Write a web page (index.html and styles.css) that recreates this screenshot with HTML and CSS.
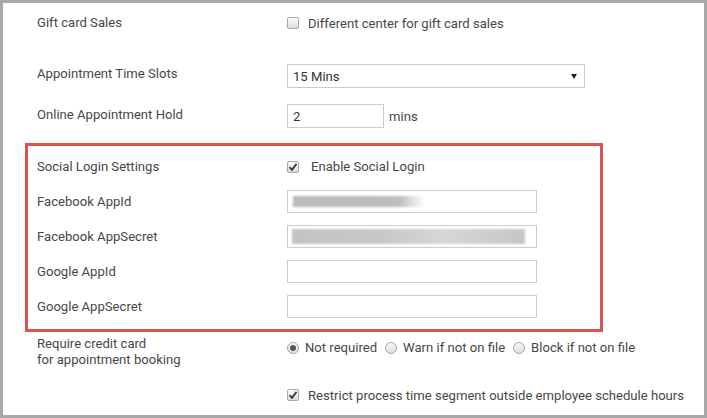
FILE: index.html
```html
<!DOCTYPE html>
<html lang="en">
<head>
    <meta charset="UTF-8">
    <title>Booking Settings</title>
    <link rel="stylesheet" href="styles.css">
</head>
<body>
    <div class="frame">
        <div class="row r-gift">
            <span class="label">Gift card Sales</span>
            <label class="opt">
                <span class="box"></span>
                Different center for gift card sales
            </label>
        </div>

        <div class="row r-slots">
            <span class="label">Appointment Time Slots</span>
            <div class="select">
                <span>15 Mins</span>
                <span class="arrow"></span>
            </div>
        </div>

        <div class="row r-hold">
            <span class="label">Online Appointment Hold</span>
            <div class="inline">
                <div class="field short">2</div>
                <span class="unit">mins</span>
            </div>
        </div>

        <div class="social">
            <div class="row r-enable">
                <span class="label">Social Login Settings</span>
                <label class="opt wide">
                    <span class="box checked">
                        <svg width="10" height="10" viewBox="0 0 10 10"><path d="M1.5 5.2 L4 7.8 L8.6 1.8" fill="none" stroke="#333" stroke-width="1.8"/></svg>
                    </span>
                    Enable Social Login
                </label>
            </div>
            <div class="row">
                <span class="label">Facebook AppId</span>
                <div class="field"><span class="blur blur-id"></span></div>
            </div>
            <div class="row">
                <span class="label">Facebook AppSecret</span>
                <div class="field"><span class="blur blur-secret"></span></div>
            </div>
            <div class="row">
                <span class="label">Google AppId</span>
                <div class="field"></div>
            </div>
            <div class="row">
                <span class="label">Google AppSecret</span>
                <div class="field"></div>
            </div>
        </div>

        <div class="row r-credit">
            <span class="label">Require credit card<br>for appointment booking</span>
            <div class="radios">
                <label class="radio"><span class="dot on"></span>Not required</label>
                <label class="radio"><span class="dot"></span>Warn if not on file</label>
                <label class="radio"><span class="dot"></span>Block if not on file</label>
            </div>
        </div>

        <div class="row r-restrict">
            <span class="label"></span>
            <label class="opt">
                <span class="box checked">
                    <svg width="10" height="10" viewBox="0 0 10 10"><path d="M1.5 5.2 L4 7.8 L8.6 1.8" fill="none" stroke="#333" stroke-width="1.8"/></svg>
                </span>
                Restrict process time segment outside employee schedule hours
            </label>
        </div>
    </div>
</body>
</html>
```

FILE: styles.css
```css
body { margin: 0; font-family: Roboto, "Liberation Sans", Arial, sans-serif; font-size: 13.1px; color: #474747; }
.frame { width: 707px; height: 418px; box-sizing: border-box; border: 3px solid #a8a8a8; padding-top: 5px; background: #fff; }

.row { display: grid; grid-template-columns: 250px auto; align-items: center; padding-left: 34px; }
.label { line-height: 16px; }
.r-gift { height: 30px; }
.r-slots { height: 24px; margin-top: 26px; }
.r-slots .label { margin-top: -4px; }
.r-hold { height: 24px; margin-top: 16px; }
.r-hold .label { margin-top: -2px; }
.r-credit { align-items: start; margin-top: 4px; }
.r-restrict { height: 24px; margin-top: 15px; }

.opt { display: flex; align-items: center; }
.box { width: 12px; height: 12px; box-sizing: border-box; border: 1px solid #a9a9a9; border-radius: 2px; background: linear-gradient(#fafafa, #dcdcdc); margin-right: 9px; display: flex; align-items: center; justify-content: center; }
.opt.wide .box { margin-right: 12px; }

.select { width: 298px; height: 24px; box-sizing: border-box; border: 1px solid #ccc; display: flex; align-items: center; justify-content: space-between; padding: 0 7px 0 5px; color: #333; }
.arrow { width: 0; height: 0; border-left: 3px solid transparent; border-right: 3px solid transparent; border-top: 5px solid #222; }

.inline { display: flex; align-items: center; }
.field { width: 250px; height: 23px; box-sizing: border-box; border: 1px solid #ccc; display: flex; align-items: center; padding-left: 5px; color: #333; }
.field.short { width: 97px; height: 24px; }
.unit { margin-left: 5px; }

.social { margin: 15px 0 0 22px; width: 578px; box-sizing: border-box; border: 3px solid #d9534f; padding: 9px 0 11px 9px; }
.social .row { padding-left: 0; height: 23px; }
.social .row + .row { margin-top: 12px; }
.social .r-enable { margin-bottom: 3px; }

.blur { display: block; filter: blur(1px); }
.blur-id { width: 132px; height: 11px; background: linear-gradient(90deg, #bbb, #bdbdbd 80%, rgba(210, 210, 210, 0)); }
.blur-secret { width: 233px; height: 15px; margin-left: -1px; background: linear-gradient(90deg, #c3c3c3, #c8c8c8 40%, #d6d6d6 65%, #c6c6c6); }

.radios { display: flex; align-items: center; padding-top: 4px; line-height: 16px; }
.radio { display: flex; align-items: center; margin-right: 8px; }
.dot { width: 12px; height: 12px; box-sizing: border-box; border: 1px solid #a9a9a9; border-radius: 50%; background: linear-gradient(#fafafa, #dcdcdc); margin-right: 6px; display: flex; align-items: center; justify-content: center; }
.dot.on::after { content: ""; width: 6px; height: 6px; border-radius: 50%; background: #555; }
```
